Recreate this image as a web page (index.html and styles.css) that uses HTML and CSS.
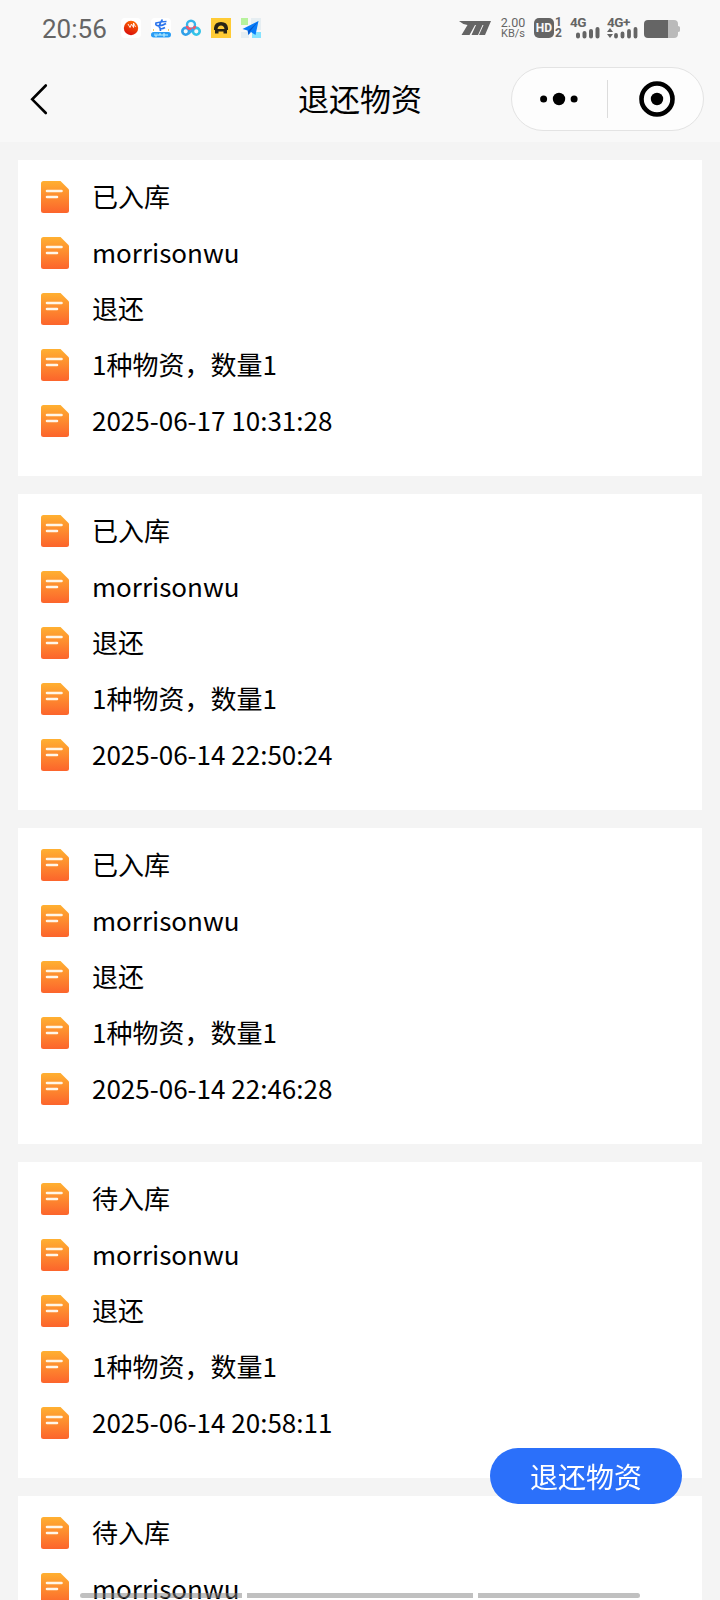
FILE: index.html
```html
<!DOCTYPE html>
<html lang="zh-CN">

<head>
    <meta charset="UTF-8">
    <meta name="viewport" content="width=device-width, initial-scale=1.0">
    <title>退还物资</title>
    <link rel="stylesheet" href="styles.css">
</head>

<body>
    <!-- 图标定义 -->
    <svg class="defs" width="0" height="0">
        <linearGradient id="orange" x1="0" y1="0" x2="0" y2="1">
            <stop offset="0" stop-color="#ffb031" />
            <stop offset="1" stop-color="#fc642c" />
        </linearGradient>
        <symbol id="doc" viewBox="0 0 28 32">
            <path d="M2.500 0H19.500L28 8.500V29.500Q28 32 25.500 32H2.500Q0 32 0 29.500V2.500Q0 0 2.500 0Z" fill="url(#orange)" />
            <path d="M6 10H20.500M6 16H16" stroke="#fff6e8" stroke-width="2.600" stroke-linecap="round" />
        </symbol>
    </svg>

    <header class="header">
        <div class="status">
            <span class="time">20:56</span>
            <div class="apps">
                <svg width="20" height="20" viewBox="0 0 20 20">
                    <rect width="20" height="20" rx="4" fill="#fff" />
                    <linearGradient id="red" x1="0.700" y1="0" x2="0.300" y2="1">
                        <stop offset="0" stop-color="#ff6a00" />
                        <stop offset="1" stop-color="#d80d0d" />
                    </linearGradient>
                    <circle cx="10" cy="10" r="7.200" fill="url(#red)" />
                    <path d="M7 6L9 9.500L10.500 6L12.500 9.500L12.500 5L14.500 9" fill="none" stroke="#fff" stroke-width="0.900" />
                </svg>
                <svg width="20" height="20" viewBox="0 0 20 20">
                    <rect width="20" height="20" rx="4" fill="#fff" />
                    <path d="M15.500 3.500Q10 3.500 5 5Q4 7.500 7.500 7.800Q12 7.500 15 5.500M11.500 1.500Q8 6 8.500 9.500Q10 12 14 9.500M9 9.500L9.500 13" fill="none" stroke="#2a74ec" stroke-width="1.700" />
                    <rect x="0" y="14" width="20" height="5.500" rx="2.700" fill="#289cf5" />
                    <path d="M4 15.500V18H6V15.500M8 18V16H10V18M12 16H14V18H12ZM16 16V18" fill="none" stroke="#c6f6ff" stroke-width="1" />
                    <path d="M2.500 11V13M17.500 11V13" stroke="#f2cb61" stroke-width="1" />
                </svg>
                <svg width="20" height="20" viewBox="0 0 20 20">
                    <circle cx="10" cy="6.800" r="4" fill="none" stroke="#35b4ec" stroke-width="2.400" />
                    <circle cx="4.700" cy="13.300" r="3.400" fill="none" stroke="#2f9fe8" stroke-width="2.600" />
                    <circle cx="15.300" cy="13.300" r="3.400" fill="none" stroke="#33c3e8" stroke-width="2.600" />
                    <path d="M5.800 8Q6.500 11 10 11Q13.500 11 14.200 8" fill="none" stroke="#f5556a" stroke-width="2.400" />
                    <path d="M7.500 15.500L12.500 11" stroke="#35a9ed" stroke-width="2.400" />
                </svg>
                <svg width="20" height="20" viewBox="0 0 20 20">
                    <rect width="20" height="20" fill="#ffcb35" />
                    <path d="M3 12V10Q3.500 4 10 4T17 10V12H16V15.500H12.500V13.500H7.500V15.500H4V12ZM6.500 11H13.500Q13 7.500 10 7.500T6.500 11Z" fill="#292416" fill-rule="evenodd" />
                </svg>
                <svg width="20" height="20" viewBox="0 0 20 20">
                    <rect width="7" height="7" fill="#b7f29d" />
                    <rect x="10" width="10" height="12" fill="#e6eef2" />
                    <rect y="14" width="8" height="6" fill="#e6eef2" />
                    <rect x="11" y="14" width="9" height="6" fill="#86e3ff" />
                    <path d="M17.500 3L14.500 17L10 14L7.500 17L6.500 12.500L1.500 11Z" fill="#087cf8" />
                    <path d="M17.500 3L7 13L7.500 17L9 13.500Z" fill="#0754c8" />
                </svg>
            </div>
            <div class="system">
                <svg class="brand" width="32" height="14" viewBox="0 0 32 14">
                    <path d="M0 0H32L26 14H20L24.500 4H23.500L19 14H12.500L17 4H16L10.500 14H2.500L8.500 4Q3 3 0 0Z" fill="#656565" />
                </svg>
                <div class="speed"><span>2.00</span><span>KB/s</span></div>
                <span class="hd">HD</span>
                <div class="sim"><span>1</span><span>2</span></div>
                <div class="signal">
                    <span>4G</span>
                    <svg width="31" height="12" viewBox="0 0 31 12">
                        <path d="M8 7.500V9.500M14.500 6V9.500M21 4V9.500M27.500 2V9.500" stroke="#656565" stroke-width="4" stroke-linecap="round" />
                    </svg>
                </div>
                <div class="signal">
                    <span>4G+</span>
                    <svg width="31" height="12" viewBox="0 0 31 12">
                        <path d="M0 5L3 1L6 5ZM0 7L3 11L6 7Z" fill="#656565" />
                        <path d="M9 8V9.500M15.500 6.500V9.500M22 4V9.500M28.500 2V9.500" stroke="#656565" stroke-width="3.800" stroke-linecap="round" />
                    </svg>
                </div>
                <svg class="battery" width="36" height="18" viewBox="0 0 36 18">
                    <path d="M24 0H30Q34 0 34 4V6Q36 6 36 7.500V10.500Q36 12 34 12V14Q34 18 30 18H24Z" fill="#bababa" />
                    <path d="M24 0H4Q0 0 0 4V14Q0 18 4 18H24Z" fill="#656565" />
                </svg>
            </div>
        </div>

        <div class="navbar">
            <svg class="back" width="18" height="32" viewBox="0 0 18 32">
                <path d="M15.800 2.500L2.200 16.300L15.800 30" fill="none" stroke="#000" stroke-width="2.600" stroke-linecap="round" />
            </svg>
            <h1>退还物资</h1>
            <div class="capsule">
                <svg width="38" height="14" viewBox="0 0 38 14">
                    <circle cx="3.600" cy="7" r="3.500" />
                    <circle cx="19" cy="7" r="6.200" />
                    <circle cx="34.100" cy="7" r="3.500" />
                </svg>
                <i class="divider"></i>
                <svg width="36" height="36" viewBox="0 0 36 36">
                    <circle cx="18" cy="18" r="15.500" fill="none" stroke="#000" stroke-width="4.600" />
                    <circle cx="18" cy="18" r="6.200" />
                </svg>
            </div>
        </div>
    </header>

    <main class="list">
        <ul class="card">
            <li><svg class="icon"><use href="#doc" /></svg><span>已入库</span></li>
            <li><svg class="icon"><use href="#doc" /></svg><span>morrisonwu</span></li>
            <li><svg class="icon"><use href="#doc" /></svg><span>退还</span></li>
            <li><svg class="icon"><use href="#doc" /></svg><span>1种物资，数量1</span></li>
            <li><svg class="icon"><use href="#doc" /></svg><span>2025-06-17 10:31:28</span></li>
        </ul>
        <ul class="card">
            <li><svg class="icon"><use href="#doc" /></svg><span>已入库</span></li>
            <li><svg class="icon"><use href="#doc" /></svg><span>morrisonwu</span></li>
            <li><svg class="icon"><use href="#doc" /></svg><span>退还</span></li>
            <li><svg class="icon"><use href="#doc" /></svg><span>1种物资，数量1</span></li>
            <li><svg class="icon"><use href="#doc" /></svg><span>2025-06-14 22:50:24</span></li>
        </ul>
        <ul class="card">
            <li><svg class="icon"><use href="#doc" /></svg><span>已入库</span></li>
            <li><svg class="icon"><use href="#doc" /></svg><span>morrisonwu</span></li>
            <li><svg class="icon"><use href="#doc" /></svg><span>退还</span></li>
            <li><svg class="icon"><use href="#doc" /></svg><span>1种物资，数量1</span></li>
            <li><svg class="icon"><use href="#doc" /></svg><span>2025-06-14 22:46:28</span></li>
        </ul>
        <ul class="card">
            <li><svg class="icon"><use href="#doc" /></svg><span>待入库</span></li>
            <li><svg class="icon"><use href="#doc" /></svg><span>morrisonwu</span></li>
            <li><svg class="icon"><use href="#doc" /></svg><span>退还</span></li>
            <li><svg class="icon"><use href="#doc" /></svg><span>1种物资，数量1</span></li>
            <li><svg class="icon"><use href="#doc" /></svg><span>2025-06-14 20:58:11</span></li>
        </ul>
        <ul class="card">
            <li><svg class="icon"><use href="#doc" /></svg><span>待入库</span></li>
            <li><svg class="icon"><use href="#doc" /></svg><span>morrisonwu</span></li>
        </ul>
    </main>

    <button class="return-btn" type="button">退还物资</button>

    <!-- 底部手势条 -->
    <div class="gesture"><i></i><i></i><i></i></div>
</body>

</html>
```
FILE: styles.css
```css
* {
    box-sizing: border-box;
}

body {
    margin: 0;
    height: 1600px;
    overflow: hidden;
    background-color: #f4f4f4;
    color: #000;
    font-family: "Noto Sans CJK SC", sans-serif;
}

svg {
    display: block;
    flex: none;
}

.defs {
    position: absolute;
}

.header {
    height: 142px;
    background-color: #f8f8f8;
}

/* 状态栏 */
.status {
    display: flex;
    align-items: center;
    height: 56px;
    padding: 0 40px 0 42px;
    color: #656565;
    font-family: Roboto, sans-serif;
}

.time {
    width: 79px;
    padding-top: 2px;
    font-size: 26px;
    line-height: 30px;
}

.apps {
    display: flex;
    gap: 10px;
}

.system {
    display: flex;
    align-items: center;
    margin-left: auto;
}

.brand {
    margin-right: 9px;
}

.speed {
    display: flex;
    flex-direction: column;
    width: 26px;
    margin-right: 8px;
    font-size: 12.500px;
    line-height: 11px;
    text-align: center;
    white-space: nowrap;
}

.speed span:last-child {
    font-size: 11px;
}

.hd {
    width: 20px;
    height: 20px;
    border-radius: 5px;
    background-color: #656565;
    color: #f8f8f8;
    font-size: 12px;
    font-weight: bold;
    line-height: 20px;
    text-align: center;
}

.sim {
    display: flex;
    flex-direction: column;
    width: 8px;
    margin: 0 7px 0 1px;
    font-size: 12px;
    font-weight: bold;
    line-height: 11px;
}

.signal {
    width: 31px;
    height: 22px;
    margin-right: 6px;
    font-size: 13.500px;
    font-weight: bold;
    line-height: 11px;
    letter-spacing: -0.5px;
}

.signal span {
    display: block;
    height: 10px;
}

.battery {
    margin-top: 2px;
}

/* 导航栏 */
.navbar {
    display: grid;
    grid-template-columns: 1fr auto 1fr;
    align-items: center;
    height: 86px;
    padding: 0 16px;
}

.back {
    margin-left: 14px;
}

.navbar h1 {
    margin: 0 0 2px;
    font-size: 31px;
    font-weight: normal;
    line-height: 46px;
}

.capsule {
    display: flex;
    align-items: center;
    justify-self: end;
    width: 193px;
    height: 64px;
    padding: 0 28px;
    border: 1px solid #e3e3e3;
    border-radius: 32px;
    background-color: #fdfdfd;
}

.divider {
    width: 1px;
    height: 38px;
    margin: 0 31px 0 29px;
    background-color: #dcdcdc;
}

/* 列表 */
.list {
    display: flex;
    flex-direction: column;
    gap: 18px;
    height: 1458px;
    padding: 18px 18px 0;
    overflow: hidden;
}

.card {
    flex: none;
    margin: 0;
    padding: 9px 23px 27px;
    background-color: #fff;
    list-style-type: none;
}

.card li {
    display: flex;
    align-items: center;
    gap: 23px;
    height: 56px;
    font-size: 26px;
    line-height: 38px;
}

.card span {
    padding-bottom: 2px;
}

.icon {
    width: 28px;
    height: 32px;
}

.return-btn {
    position: fixed;
    top: 1448px;
    right: 38px;
    width: 192px;
    height: 56px;
    padding: 0;
    border: none;
    border-radius: 28px;
    background-color: #2b70fa;
    color: #fff;
    font-family: inherit;
    font-size: 28px;
    line-height: 56px;
    cursor: pointer;
}

.gesture {
    position: fixed;
    left: 80px;
    right: 80px;
    bottom: 2px;
    display: grid;
    grid-template-columns: 162px 226px 162px;
    gap: 5px;
}

.gesture i {
    height: 5px;
    background-color: rgba(130, 130, 130, 0.5);
}

.gesture i:first-child {
    border-radius: 3px 0 0 3px;
}

.gesture i:last-child {
    border-radius: 0 3px 3px 0;
}
```
